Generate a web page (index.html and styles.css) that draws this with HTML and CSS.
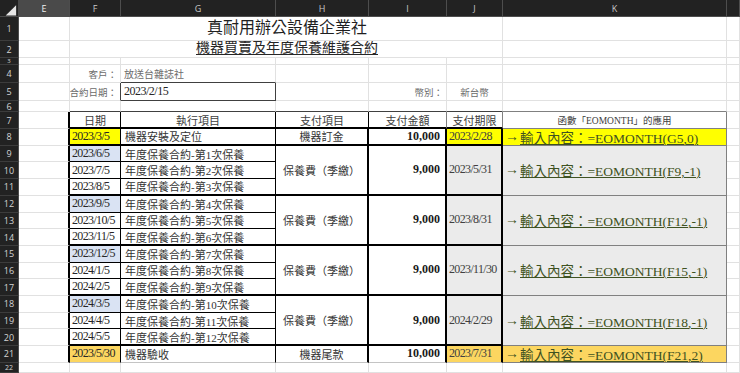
FILE: index.html
```html
<!DOCTYPE html>
<html lang="zh-Hant">
<head>
<meta charset="utf-8">
<title>EOMONTH</title>
<link rel="stylesheet" href="styles.css">
</head>
<body>
<div class="sheet">
  <!-- column headers -->
  <div class="corner"><svg width="19" height="17" viewBox="0 0 19 17"><polygon points="17,5 17,16 6,16" fill="#e6e6e6"/></svg></div>
  <div class="ch sel">E</div><div class="ch">F</div><div class="ch">G</div><div class="ch">H</div><div class="ch">I</div><div class="ch">J</div><div class="ch">K</div><div class="ch"></div>

  <!-- row 1 -->
  <div class="rh">1</div><div class="c"></div>
  <div class="c title s5">真耐用辦公設備企業社</div>
  <div class="c"></div><div class="c"></div>
  <!-- row 2 -->
  <div class="rh">2</div><div class="c"></div>
  <div class="c subtitle s5"><span>機器買賣及年度保養維護合約</span></div>
  <div class="c"></div><div class="c"></div>
  <!-- row 3 -->
  <div class="rh rh3">3</div><div class="c"></div><div class="c"></div><div class="c"></div><div class="c"></div><div class="c"></div><div class="c"></div><div class="c"></div><div class="c"></div>
  <!-- row 4 -->
  <div class="rh">4</div><div class="c"></div>
  <div class="c lbl rt">客戶：</div>
  <div class="c val b1d">放送台雜誌社</div>
  <div class="c"></div><div class="c"></div><div class="c"></div><div class="c"></div><div class="c"></div>
  <!-- row 5 -->
  <div class="rh">5</div><div class="c"></div>
  <div class="c lbl rt r1d">合約日期：</div>
  <div class="c val dk r1d b1d">2023/2/15</div>
  <div class="c"></div>
  <div class="c lbl rt">幣別：</div>
  <div class="c lbl ctr">新台幣</div>
  <div class="c"></div><div class="c"></div>
  <!-- row 6 -->
  <div class="rh">6</div><div class="c"></div>
  <div class="c b1d"></div><div class="c b1d"></div><div class="c b1d"></div><div class="c b1d"></div><div class="c b1d"></div><div class="c bg"></div><div class="c"></div>
  <!-- row 7 -->
  <div class="rh">7</div><div class="c r2"></div>
  <div class="c hd r1 b2">日期</div>
  <div class="c hd r1 b2">執行項目</div>
  <div class="c hd r1 b2">支付項目</div>
  <div class="c hd rg b2">支付金額</div>
  <div class="c hd rg b2">支付期限</div>
  <div class="c kh rg bg">函數「EOMONTH」的應用</div>
  <div class="c"></div>
  <!-- row 8 -->
  <div class="rh">8</div><div class="c r2"></div>
  <div class="c dt yl r1 b2">2023/3/5</div>
  <div class="c tx r1 b2">機器安裝及定位</div>
  <div class="c tx ctr r2 b2">機器訂金</div>
  <div class="c num r2 b2">10,000</div>
  <div class="c jd yl r2 b2">2023/2/28</div>
  <div class="c k yl rg bg"><span class="arr">→</span><span class="u">輸入內容：=EOMONTH(G5,0)</span></div>
  <div class="c"></div>
  <!-- row 9 -->
  <div class="rh">9</div><div class="c r2"></div>
  <div class="c dt bl r1 b1">2023/6/5</div>
  <div class="c tx r1 b1">年度保養合約-第1次保養</div>
  <div class="c tx ctr r2 b2 s3">保養費（季繳）</div>
  <div class="c num r2 b2 s3">9,000</div>
  <div class="c jd gr r2 b2 s3">2023/5/31</div>
  <div class="c k gr rg bg s3"><span class="arr">→</span><span class="u">輸入內容：=EOMONTH(F9,-1)</span></div>
  <div class="c"></div>
  <!-- row 10 -->
  <div class="rh">10</div><div class="c r2"></div>
  <div class="c dt r1 b1">2023/7/5</div>
  <div class="c tx r1 b1">年度保養合約-第2次保養</div>
  <div class="c"></div>
  <!-- row 11 -->
  <div class="rh">11</div><div class="c r2"></div>
  <div class="c dt r1 b2">2023/8/5</div>
  <div class="c tx r1 b2">年度保養合約-第3次保養</div>
  <div class="c"></div>
  <!-- row 12 -->
  <div class="rh">12</div><div class="c r2"></div>
  <div class="c dt bl r1 b1">2023/9/5</div>
  <div class="c tx r1 b1">年度保養合約-第4次保養</div>
  <div class="c tx ctr r2 b2 s3">保養費（季繳）</div>
  <div class="c num r2 b2 s3">9,000</div>
  <div class="c jd gr r2 b2 s3">2023/8/31</div>
  <div class="c k gr rg bg s3"><span class="arr">→</span><span class="u">輸入內容：=EOMONTH(F12,-1)</span></div>
  <div class="c"></div>
  <!-- row 13 -->
  <div class="rh">13</div><div class="c r2"></div>
  <div class="c dt r1 b1">2023/10/5</div>
  <div class="c tx r1 b1">年度保養合約-第5次保養</div>
  <div class="c"></div>
  <!-- row 14 -->
  <div class="rh">14</div><div class="c r2"></div>
  <div class="c dt r1 b2">2023/11/5</div>
  <div class="c tx r1 b2">年度保養合約-第6次保養</div>
  <div class="c"></div>
  <!-- row 15 -->
  <div class="rh">15</div><div class="c r2"></div>
  <div class="c dt bl r1 b1">2023/12/5</div>
  <div class="c tx r1 b1">年度保養合約-第7次保養</div>
  <div class="c tx ctr r2 b2 s3">保養費（季繳）</div>
  <div class="c num r2 b2 s3">9,000</div>
  <div class="c jd gr r2 b2 s3">2023/11/30</div>
  <div class="c k gr rg bg s3"><span class="arr">→</span><span class="u">輸入內容：=EOMONTH(F15,-1)</span></div>
  <div class="c"></div>
  <!-- row 16 -->
  <div class="rh">16</div><div class="c r2"></div>
  <div class="c dt r1 b1">2024/1/5</div>
  <div class="c tx r1 b1">年度保養合約-第8次保養</div>
  <div class="c"></div>
  <!-- row 17 -->
  <div class="rh">17</div><div class="c r2"></div>
  <div class="c dt r1 b2">2024/2/5</div>
  <div class="c tx r1 b2">年度保養合約-第9次保養</div>
  <div class="c"></div>
  <!-- row 18 -->
  <div class="rh">18</div><div class="c r2"></div>
  <div class="c dt bl r1 b1">2024/3/5</div>
  <div class="c tx r1 b1">年度保養合約-第10次保養</div>
  <div class="c tx ctr r2 b2 s3">保養費（季繳）</div>
  <div class="c num r2 b2 s3">9,000</div>
  <div class="c jd gr r2 b2 s3">2024/2/29</div>
  <div class="c k gr rg bg s3"><span class="arr">→</span><span class="u">輸入內容：=EOMONTH(F18,-1)</span></div>
  <div class="c"></div>
  <!-- row 19 -->
  <div class="rh">19</div><div class="c r2"></div>
  <div class="c dt r1 b1">2024/4/5</div>
  <div class="c tx r1 b1">年度保養合約-第11次保養</div>
  <div class="c"></div>
  <!-- row 20 -->
  <div class="rh">20</div><div class="c r2"></div>
  <div class="c dt r1 b2">2024/5/5</div>
  <div class="c tx r1 b2">年度保養合約-第12次保養</div>
  <div class="c"></div>
  <!-- row 21 -->
  <div class="rh">21</div><div class="c r2"></div>
  <div class="c dt or r1 bll">2023/5/30</div>
  <div class="c tx r1 bll">機器驗收</div>
  <div class="c tx ctr r2 bll">機器尾款</div>
  <div class="c num r2 bll">10,000</div>
  <div class="c jd or r2 bll">2023/7/31</div>
  <div class="c k or rg bg"><span class="arr">→</span><span class="u">輸入內容：=EOMONTH(F21,2)</span></div>
  <div class="c"></div>
  <!-- row 22 -->
  <div class="rh rh22">22</div><div class="c"></div><div class="c"></div><div class="c"></div><div class="c"></div><div class="c"></div><div class="c"></div><div class="c"></div><div class="c"></div>
</div>
</body>
</html>
```

FILE: styles.css
```css
html, body {
  margin: 0;
  padding: 0;
  background: #ffffff;
  overflow: hidden;
}

.sheet {
  display: grid;
  grid-template-columns: 19px 51px 51px 155px 93px 78px 56px 224px 13px;
  grid-template-rows: 17px 24px 17px 7px 18px 18px 11px 17px repeat(14, 16.714px) 10px;
  width: 740px;
  height: 373px;
  overflow: hidden;
  font-family: "Liberation Serif", "Noto Sans CJK TC", serif;
  color: #262626;
}

.sheet > div {
  box-sizing: border-box;
  display: flex;
  align-items: center;
  overflow: hidden;
  white-space: nowrap;
  min-width: 0;
  min-height: 0;
}

/* headers */
.corner {
  background: #222222;
  border-right: 1px solid #4a4a4a;
  border-bottom: 1px solid #4a4a4a;
}
.corner svg { display: block; }

.ch {
  background: #222222;
  color: #c8c8c8;
  font: 9px "Open Sans", "DejaVu Sans", sans-serif;
  justify-content: center;
  border-right: 1px solid #4d4d4d;
  border-bottom: 1px solid #4d4d4d;
}
.ch.sel {
  background: #4a4a4a;
  color: #f0f0f0;
}

.rh {
  background: #222222;
  color: #d4d4d4;
  font: 9px "Open Sans", "DejaVu Sans", sans-serif;
  justify-content: center;
  border-right: 1px solid #4d4d4d;
  border-bottom: 1px solid #3c3c3c;
}
.rh3 { font-size: 6px; line-height: 6px; }
.rh22 { align-items: flex-start !important; font-size: 7px; line-height: 8px; padding-top: 1px; }

/* base cell with gridlines */
.c {
  border-right: 1px solid #e1e1e1;
  border-bottom: 1px solid #e1e1e1;
  background: #ffffff;
}

/* spans */
.s5 { grid-column: span 5; }
.s3 { grid-row: span 3; }

/* top area */
.title {
  justify-content: center;
  align-items: flex-end !important;
  font-size: 16px;
  color: #1f1f1f;
  padding-bottom: 2px;
  padding-left: 2px;
}
.subtitle {
  justify-content: center;
  align-items: flex-end !important;
  font-size: 14px;
  color: #262626;
  padding-bottom: 1px;
  padding-left: 2px;
}
.subtitle span {
  text-decoration: underline;
  text-underline-offset: 2px;
}
.lbl {
  font-size: 9.5px;
  color: #6b6b6b;
  padding: 0 3px;
}
.val {
  font-size: 10px;
  color: #6b6b6b;
  padding: 0 3px;
}
.val.dk {
  font-size: 12px;
  color: #262626;
  letter-spacing: -0.5px;
}
.rt { justify-content: flex-end; }
.ctr { justify-content: center; }

/* table text */
.hd {
  font-size: 11px;
  color: #404040;
  justify-content: center;
}
.kh {
  font-size: 9.5px;
  color: #404040;
  justify-content: center;
}
.dt {
  font-size: 12px;
  letter-spacing: -0.65px;
  padding-left: 2px;
  color: #262626;
}
.tx {
  font-size: 11px;
  padding-left: 4px;
  color: #333333;
}
.tx.ctr { padding-left: 0; }
.num {
  font-size: 12px;
  font-weight: 700;
  justify-content: flex-end;
  padding-right: 5px;
  color: #1a1a1a;
}
.jd {
  font-size: 12px;
  letter-spacing: -0.65px;
  padding-left: 2px;
  color: #404040;
}
.k {
  font-size: 13.5px;
  color: #3f5222;
  padding-left: 2px;
}
.arr {
  font-size: 14px;
  margin-right: 1px;
}
.u {
  text-decoration: underline;
  text-decoration-thickness: 1px;
  text-underline-offset: 1px;
}

/* fills */
.yl { background: #ffff00; }
.bl { background: #dae3f3; }
.gr { background: #ebebeb; }
.or { background: #fcd660; }

/* borders */
.r1 { border-right: 1px solid #000000; }
.r2 { border-right: 2px solid #000000; }
.rg { border-right: 1px solid #808080; }
.r1d { border-right: 1px solid #404040; }
.b1 { border-bottom: 1px solid #000000; }
.b2 { border-bottom: 2px solid #000000; }
.bg { border-bottom: 1px solid #808080; }
.b1d { border-bottom: 1px solid #404040; }
.bll { border-bottom: 1px solid #c4c4c4; }
```
